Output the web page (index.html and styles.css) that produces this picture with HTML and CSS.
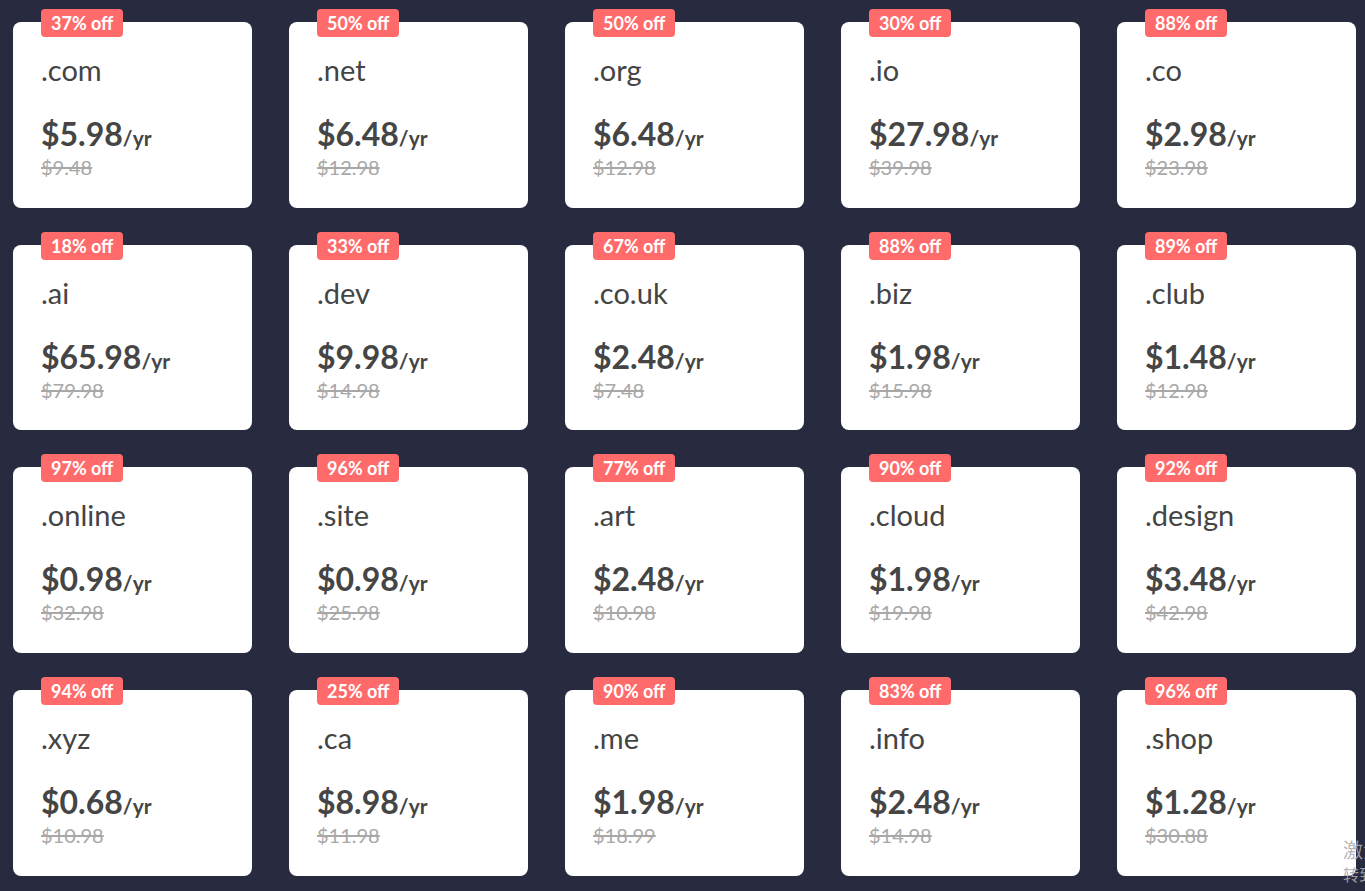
FILE: index.html
```html
<!DOCTYPE html>
<html lang="en">
<head>
<meta charset="utf-8">
<title>Domain deals</title>
<link rel="stylesheet" href="styles.css">
</head>
<body>
<main class="grid">
  <div class="card"><span class="badge">37% off</span><div class="tld">.com</div><div class="price">$5.98<span class="per">/yr</span></div><div class="old">$9.48</div></div>
  <div class="card"><span class="badge">50% off</span><div class="tld">.net</div><div class="price">$6.48<span class="per">/yr</span></div><div class="old">$12.98</div></div>
  <div class="card"><span class="badge">50% off</span><div class="tld">.org</div><div class="price">$6.48<span class="per">/yr</span></div><div class="old">$12.98</div></div>
  <div class="card"><span class="badge">30% off</span><div class="tld">.io</div><div class="price">$27.98<span class="per">/yr</span></div><div class="old">$39.98</div></div>
  <div class="card"><span class="badge">88% off</span><div class="tld">.co</div><div class="price">$2.98<span class="per">/yr</span></div><div class="old">$23.98</div></div>

  <div class="card"><span class="badge">18% off</span><div class="tld">.ai</div><div class="price">$65.98<span class="per">/yr</span></div><div class="old">$79.98</div></div>
  <div class="card"><span class="badge">33% off</span><div class="tld">.dev</div><div class="price">$9.98<span class="per">/yr</span></div><div class="old">$14.98</div></div>
  <div class="card"><span class="badge">67% off</span><div class="tld">.co.uk</div><div class="price">$2.48<span class="per">/yr</span></div><div class="old">$7.48</div></div>
  <div class="card"><span class="badge">88% off</span><div class="tld">.biz</div><div class="price">$1.98<span class="per">/yr</span></div><div class="old">$15.98</div></div>
  <div class="card"><span class="badge">89% off</span><div class="tld">.club</div><div class="price">$1.48<span class="per">/yr</span></div><div class="old">$12.98</div></div>

  <div class="card"><span class="badge">97% off</span><div class="tld">.online</div><div class="price">$0.98<span class="per">/yr</span></div><div class="old">$32.98</div></div>
  <div class="card"><span class="badge">96% off</span><div class="tld">.site</div><div class="price">$0.98<span class="per">/yr</span></div><div class="old">$25.98</div></div>
  <div class="card"><span class="badge">77% off</span><div class="tld">.art</div><div class="price">$2.48<span class="per">/yr</span></div><div class="old">$10.98</div></div>
  <div class="card"><span class="badge">90% off</span><div class="tld">.cloud</div><div class="price">$1.98<span class="per">/yr</span></div><div class="old">$19.98</div></div>
  <div class="card"><span class="badge">92% off</span><div class="tld">.design</div><div class="price">$3.48<span class="per">/yr</span></div><div class="old">$42.98</div></div>

  <div class="card"><span class="badge">94% off</span><div class="tld">.xyz</div><div class="price">$0.68<span class="per">/yr</span></div><div class="old">$10.98</div></div>
  <div class="card"><span class="badge">25% off</span><div class="tld">.ca</div><div class="price">$8.98<span class="per">/yr</span></div><div class="old">$11.98</div></div>
  <div class="card"><span class="badge">90% off</span><div class="tld">.me</div><div class="price">$1.98<span class="per">/yr</span></div><div class="old">$18.99</div></div>
  <div class="card"><span class="badge">83% off</span><div class="tld">.info</div><div class="price">$2.48<span class="per">/yr</span></div><div class="old">$14.98</div></div>
  <div class="card"><span class="badge">96% off</span><div class="tld">.shop</div><div class="price">$1.28<span class="per">/yr</span></div><div class="old">$30.88</div></div>
</main>
<div class="watermark">
  <div class="wm-title">激活 Windows</div>
  <div class="wm-sub">转到“设置”以激活 Windows。</div>
</div>
</body>
</html>
```

FILE: styles.css
```css
html, body {
  margin: 0;
  padding: 0;
}
body {
  background: #282a3f;
  font-family: "Lato", "Noto Sans", sans-serif;
  color: #444444;
  width: 1365px;
  height: 891px;
  overflow: hidden;
  position: relative;
}
.grid {
  display: grid;
  grid-template-columns: repeat(5, 239px);
  grid-auto-rows: 185.67px;
  column-gap: 37px;
  row-gap: 37px;
  padding: 22px 0 0 13px;
}
.card {
  position: relative;
  background: #ffffff;
  border-radius: 8px;
  padding: 34px 28px 0;
  box-sizing: border-box;
}
.badge {
  position: absolute;
  top: -13px;
  left: 28px;
  height: 28px;
  line-height: 28px;
  padding: 0 10px;
  background: #ff6b6b;
  color: #ffffff;
  border-radius: 4px;
  font-weight: 700;
  font-size: 18px;
}
.tld {
  font-size: 29px;
  line-height: 28px;
  font-weight: 400;
  color: #444444;
}
.price {
  margin-top: 34px;
  font-size: 32px;
  line-height: 32px;
  font-weight: 700;
  color: #454545;
}
.per {
  font-size: 21px;
  font-weight: 700;
}
.old {
  margin-top: 1px;
  font-size: 20px;
  line-height: 24px;
  color: #a8a8a8;
  text-decoration: line-through;
}
.watermark {
  position: absolute;
  left: 1343px;
  top: 837px;
  color: rgba(170, 170, 175, 0.9);
  font-family: "Noto Sans CJK SC", sans-serif;
  white-space: nowrap;
}
.wm-title {
  font-size: 20px;
  line-height: 26px;
}
.wm-sub {
  font-size: 16px;
  line-height: 22px;
}
```
